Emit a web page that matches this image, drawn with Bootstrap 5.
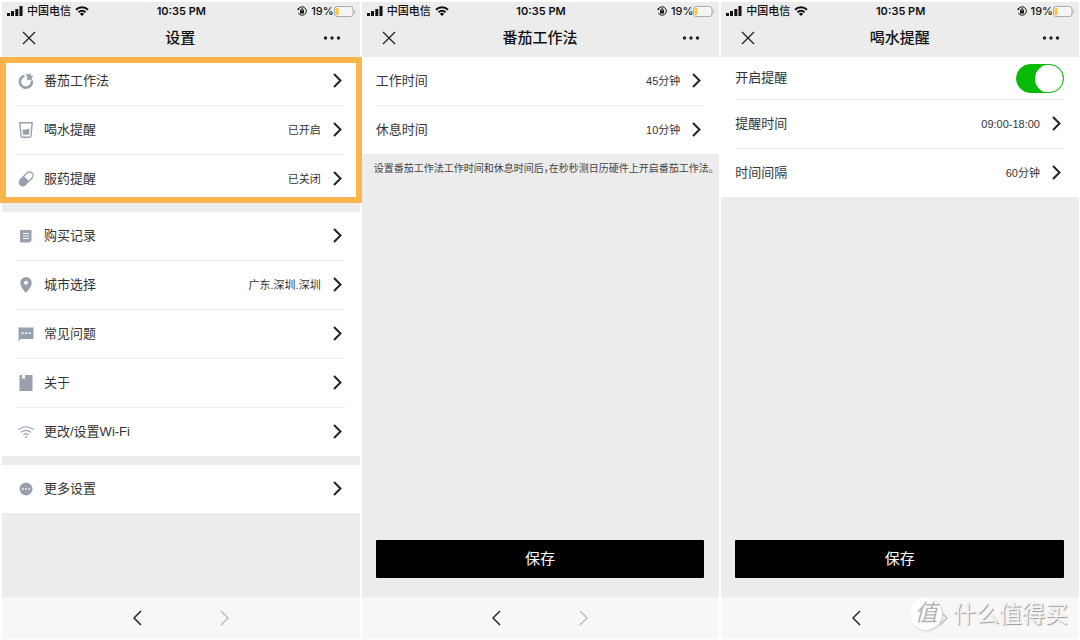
<!DOCTYPE html>
<html lang="zh-CN">
<head>
<meta charset="utf-8">
<meta name="viewport" content="width=device-width, initial-scale=1">
<title>设置</title>
<link rel="stylesheet" href="https://cdn.jsdelivr.net/npm/bootstrap@5.3.0/dist/css/bootstrap.min.css">
<style>
  body { font-family: "Liberation Sans", "Noto Sans CJK SC", sans-serif; color: #333; background: #fff; font-size: 13px; line-height: 20px; }
  .screens { display: grid; grid-template-columns: repeat(3, minmax(0, 1fr)); gap: 2px; padding: 2px 1px 1px 2px; }
  .screen { background: #ececec; }
  .thirds { display: grid; grid-template-columns: 1fr auto 1fr; align-items: center; color: #111; }
  .statusbar { height: 18px; padding: 0 4px 0 5px; font: 500 11px/18px Inter, "Noto Sans CJK SC", sans-serif; }
  .statusbar .clock { font-weight: 600; }
  .titlebar { height: 37px; padding: 0 19px 1px 18px; }
  .titlebar h1 { font-size: 15px; line-height: 20px; font-weight: 500; }
  .icon-btn { border: 0; background: none; padding: 0; width: 18px; height: 24px; display: flex; align-items: center; justify-content: center; color: #222; }
  .settings { background: #fff; padding: 0 15px 0 14px; }
  .settings + .settings { margin-top: 9px; }
  .entry { height: 48px; width: 100%; display: flex; align-items: center; padding-bottom: 1px; text-decoration: none; color: #333; }
  li + li .entry { border-top: 1px solid #ececec; height: 49px; }
  .entry.compact { height: 42px; padding: 0; }
  .entry .glyph { width: 16px; height: 16px; margin: 0 10px 0 2px; color: #98a0ad; }
  .entry .val { font-size: 11px; }
  .entry .go { width: 9px; height: 15px; margin: 0 3px 0 12px; color: #222; }
  .highlighted::after { content: ""; position: absolute; inset: 0 -2px; border: 6px solid #fdb44b; pointer-events: none; z-index: 2; }
  .form-check-input.toggle { width: 48px; height: 29px; margin: 0; background-size: 28px; border-color: #09bb07;
    --bs-form-switch-bg: url("data:image/svg+xml,%3csvg xmlns='http://www.w3.org/2000/svg' viewBox='-4 -4 8 8'%3e%3ccircle r='4' fill='%23fff'/%3e%3c/svg%3e"); }
  .form-check-input.toggle:checked { background-color: #09bb07; border-color: #09bb07;
    background-image: url("data:image/svg+xml,%3csvg xmlns='http://www.w3.org/2000/svg' viewBox='-4 -4 8 8'%3e%3ccircle r='4' fill='%23fff'/%3e%3c/svg%3e"); }
  .note { font-size: 10px; line-height: 14px; padding: 8px 0 0 12px; font-feature-settings: "halt"; white-space: nowrap; color: #444; }
  .save { margin: 0 15px 19px 14px; height: 38px; padding: 0; background: #000; color: #fff; border: 0; border-radius: 1px; font-size: 15px; line-height: 38px; }
  .save:hover { background: #222; color: #fff; }
  .pager { height: 42px; background: #f7f7f7; gap: 69px; }
  .pager .icon-btn:disabled { color: #b8b8b8; }
  .brandmark { position: absolute; right: 11px; bottom: 9px; gap: 11px; pointer-events: none; }
  .brandmark .seal { width: 32px; height: 32px; border-radius: 50%; background: #fff; box-shadow: 1px 1px 2px #ccc; color: #b4b4b4; font-size: 23px; line-height: 30px; font-style: italic; text-align: center; }
  .brandmark .brandname { font-size: 23px; line-height: 32px; color: #f4f4f4; text-shadow: 1px 1px 1px #999; }
</style>
</head>
<body>
<svg class="d-none" xmlns="http://www.w3.org/2000/svg">
  <symbol id="signal" viewBox="0 0 16 10"><path fill="currentColor" d="M0 7h3v3H0zM4 5h3v5H4zM8.300 3h3v7h-3zM12.500 0h3v10h-3z"/></symbol>
  <symbol id="wifi" viewBox="0 0 14 10"><g fill="none" stroke="currentColor" stroke-width="2"><path d="M1 3.800a8.500 8.500 0 0 1 12 0M3.500 6.300a5 5 0 0 1 7 0"/></g><path fill="currentColor" d="M7 10 4.900 7.900a3 3 0 0 1 4.200 0z"/></symbol>
  <symbol id="lock" viewBox="0 0 10 10"><path fill="none" stroke="currentColor" d="M1.300 3.200a4.200 4.200 0 1 1 0 3.600M3.800 5V3.900a1.200 1.200 0 0 1 2.400 0V5"/><path fill="currentColor" d="M3 4.600h4v2.800H3zM0 2.500l2.500 0-1 2.300z"/></symbol>
  <symbol id="battery" viewBox="0 0 22 11"><rect x=".5" y=".5" width="18.500" height="10" rx="2.500" fill="#f5f5f5" stroke="#aaa"/><path fill="#fdc62f" d="M2.500 2h2v7h-2a1 1 0 0 1-1-1V3a1 1 0 0 1 1-1z"/><path fill="#999" d="M20.200 3.500q1.500 2 0 4z"/></symbol>
  <symbol id="close" viewBox="0 0 14 14"><path fill="none" stroke="currentColor" stroke-width="1.300" d="m1 1 12 12M13 1 1 13"/></symbol>
  <symbol id="more" viewBox="0 0 18 4"><g fill="currentColor"><circle cx="2.500" cy="2" r="1.700"/><circle cx="9" cy="2" r="1.700"/><circle cx="15.500" cy="2" r="1.700"/></g></symbol>
  <symbol id="chevron" viewBox="0 0 9 15"><path fill="none" stroke="currentColor" stroke-width="2" d="m1 1 6.500 6.500L1 14"/></symbol>
  <symbol id="next" viewBox="0 0 9 16"><path fill="none" stroke="currentColor" stroke-width="1.300" d="m1 1 7 7-7 7"/></symbol>
  <symbol id="prev" viewBox="0 0 9 16"><path fill="none" stroke="currentColor" stroke-width="1.500" d="M8 1 1 8l7 7"/></symbol>
  <symbol id="tomato" viewBox="0 0 16 16"><path fill="none" stroke="currentColor" stroke-width="2.600" d="M6.500 2.800A6 6 0 1 0 13.800 7.500"/><path fill="currentColor" d="m7.500.500 2.700 1L12.300 0l.4 2.600 2.800.4-1.900 1.900.5 2.600-2.500-1L9 7.500l.4-2.900z"/></symbol>
  <symbol id="glass" viewBox="0 0 16 16"><path fill="none" stroke="currentColor" stroke-width="1.400" d="M1.800.8h12.400l-1.200 13a1.500 1.500 0 0 1-1.500 1.400h-7A1.500 1.500 0 0 1 3 13.800z"/><path fill="currentColor" d="M4.500 7.500c2.500.8 4-1 7-.5l-.6 5.700H5z"/></symbol>
  <symbol id="pill" viewBox="0 0 16 16"><g transform="rotate(45 8 8)"><path fill="currentColor" d="M3.800 7.500h8.400v5a4.200 4.200 0 0 1-8.400 0z"/><path fill="none" stroke="currentColor" stroke-width="1.300" d="M4.500 8V3a3.500 3.500 0 0 1 7 0v5"/></g></symbol>
  <symbol id="record" viewBox="0 0 16 16"><path fill="currentColor" d="M3 2h10.500v10.500L12 14.500H3a1 1 0 0 1-1-1V3a1 1 0 0 1 1-1z"/><path stroke="#fff" stroke-width=".9" d="M5 5.500h6M5 8h6M5 10.500h6"/></symbol>
  <symbol id="pin" viewBox="0 0 16 16"><path fill="currentColor" fill-rule="evenodd" d="M8 0a5.700 5.700 0 0 1 5.700 5.800C13.700 10 10 13.500 8 16 6 13.500 2.300 10 2.300 5.800A5.700 5.700 0 0 1 8 0zm0 3.800a2 2 0 1 0 0 4 2 2 0 0 0 0-4z"/></symbol>
  <symbol id="chat" viewBox="0 0 16 16"><path fill="currentColor" d="M.5 1.500h15v11.500h-13l-2 2.500z"/><path fill="#fff" d="M3.500 6.500h2v1.600h-2zM7 6.500h2v1.600H7zM10.500 6.500h2v1.600h-2z"/></symbol>
  <symbol id="book" viewBox="0 0 16 16"><path fill="currentColor" d="M1.500 0H4v4l1.500-1L7 4V0h7.500v16h-13z"/></symbol>
  <symbol id="wlan" viewBox="0 0 16 16"><g fill="none" stroke="currentColor" stroke-width="1.200"><path d="M.5 5.500q7.500-5.500 15 0M3 8.300q5-3.900 10 0M5.500 10.800q2.500-2 5 0"/></g><circle cx="8" cy="13" r="1" fill="currentColor"/></symbol>
  <symbol id="dots" viewBox="0 0 16 16"><circle cx="8" cy="8" r="6.500" fill="currentColor"/><path fill="#fff" d="M4 7.300h1.600v1.500H4zM7.200 7.300h1.600v1.500H7.200zM10.400 7.300H12v1.500h-1.600z"/></symbol>
</svg>

<main class="screens min-vh-100">
  <section class="screen d-flex flex-column">
    <div class="statusbar thirds">
      <div class="d-flex align-items-center"><svg class="me-1" width="16" height="10"><use href="#signal"/></svg><span>中国电信</span><svg class="ms-1" width="14" height="10"><use href="#wifi"/></svg></div>
      <span class="clock">10:35 PM</span>
      <div class="d-flex align-items-center justify-content-end"><svg class="me-1" width="10" height="10"><use href="#lock"/></svg><span>19%</span><svg width="22" height="11"><use href="#battery"/></svg></div>
    </div>
    <header class="titlebar thirds">
      <button class="icon-btn" type="button" aria-label="关闭"><svg width="14" height="14"><use href="#close"/></svg></button>
      <h1 class="m-0">设置</h1>
      <button class="icon-btn ms-auto" type="button" aria-label="更多"><svg width="18" height="4"><use href="#more"/></svg></button>
    </header>
    <ul class="settings list-unstyled mb-0 position-relative highlighted">
      <li><a class="entry" href="#"><svg class="glyph"><use href="#tomato"/></svg><span>番茄工作法</span><svg class="go ms-auto"><use href="#chevron"/></svg></a></li>
      <li><a class="entry" href="#"><svg class="glyph"><use href="#glass"/></svg><span>喝水提醒</span><span class="val ms-auto">已开启</span><svg class="go"><use href="#chevron"/></svg></a></li>
      <li><a class="entry" href="#"><svg class="glyph"><use href="#pill"/></svg><span>服药提醒</span><span class="val ms-auto">已关闭</span><svg class="go"><use href="#chevron"/></svg></a></li>
    </ul>
    <ul class="settings list-unstyled mb-0">
      <li><a class="entry" href="#"><svg class="glyph"><use href="#record"/></svg><span>购买记录</span><svg class="go ms-auto"><use href="#chevron"/></svg></a></li>
      <li><a class="entry" href="#"><svg class="glyph"><use href="#pin"/></svg><span>城市选择</span><span class="val ms-auto">广东.深圳.深圳</span><svg class="go"><use href="#chevron"/></svg></a></li>
      <li><a class="entry" href="#"><svg class="glyph"><use href="#chat"/></svg><span>常见问题</span><svg class="go ms-auto"><use href="#chevron"/></svg></a></li>
      <li><a class="entry" href="#"><svg class="glyph"><use href="#book"/></svg><span>关于</span><svg class="go ms-auto"><use href="#chevron"/></svg></a></li>
      <li><a class="entry" href="#"><svg class="glyph"><use href="#wlan"/></svg><span>更改/设置Wi-Fi</span><svg class="go ms-auto"><use href="#chevron"/></svg></a></li>
    </ul>
    <ul class="settings list-unstyled mb-0">
      <li><a class="entry" href="#"><svg class="glyph"><use href="#dots"/></svg><span>更多设置</span><svg class="go ms-auto"><use href="#chevron"/></svg></a></li>
    </ul>
    <nav class="pager d-flex align-items-center justify-content-center mt-auto" aria-label="页面导航">
      <button class="icon-btn" type="button" aria-label="后退"><svg width="9" height="16"><use href="#prev"/></svg></button>
      <button class="icon-btn" type="button" aria-label="前进" disabled><svg width="9" height="16"><use href="#next"/></svg></button>
    </nav>
  </section>

  <section class="screen d-flex flex-column">
    <div class="statusbar thirds">
      <div class="d-flex align-items-center"><svg class="me-1" width="16" height="10"><use href="#signal"/></svg><span>中国电信</span><svg class="ms-1" width="14" height="10"><use href="#wifi"/></svg></div>
      <span class="clock">10:35 PM</span>
      <div class="d-flex align-items-center justify-content-end"><svg class="me-1" width="10" height="10"><use href="#lock"/></svg><span>19%</span><svg width="22" height="11"><use href="#battery"/></svg></div>
    </div>
    <header class="titlebar thirds">
      <button class="icon-btn" type="button" aria-label="关闭"><svg width="14" height="14"><use href="#close"/></svg></button>
      <h1 class="m-0">番茄工作法</h1>
      <button class="icon-btn ms-auto" type="button" aria-label="更多"><svg width="18" height="4"><use href="#more"/></svg></button>
    </header>
    <ul class="settings list-unstyled mb-0">
      <li><a class="entry" href="#"><span>工作时间</span><span class="val ms-auto">45分钟</span><svg class="go"><use href="#chevron"/></svg></a></li>
      <li><a class="entry" href="#"><span>休息时间</span><span class="val ms-auto">10分钟</span><svg class="go"><use href="#chevron"/></svg></a></li>
    </ul>
    <p class="note mb-0">设置番茄工作法工作时间和休息时间后，在秒秒测日历硬件上开启番茄工作法。</p>
    <button class="save btn mt-auto" type="button">保存</button>
    <nav class="pager d-flex align-items-center justify-content-center" aria-label="页面导航">
      <button class="icon-btn" type="button" aria-label="后退"><svg width="9" height="16"><use href="#prev"/></svg></button>
      <button class="icon-btn" type="button" aria-label="前进" disabled><svg width="9" height="16"><use href="#next"/></svg></button>
    </nav>
  </section>

  <section class="screen d-flex flex-column position-relative">
    <div class="statusbar thirds">
      <div class="d-flex align-items-center"><svg class="me-1" width="16" height="10"><use href="#signal"/></svg><span>中国电信</span><svg class="ms-1" width="14" height="10"><use href="#wifi"/></svg></div>
      <span class="clock">10:35 PM</span>
      <div class="d-flex align-items-center justify-content-end"><svg class="me-1" width="10" height="10"><use href="#lock"/></svg><span>19%</span><svg width="22" height="11"><use href="#battery"/></svg></div>
    </div>
    <header class="titlebar thirds">
      <button class="icon-btn" type="button" aria-label="关闭"><svg width="14" height="14"><use href="#close"/></svg></button>
      <h1 class="m-0">喝水提醒</h1>
      <button class="icon-btn ms-auto" type="button" aria-label="更多"><svg width="18" height="4"><use href="#more"/></svg></button>
    </header>
    <ul class="settings list-unstyled mb-0">
      <li><div class="entry compact"><label for="remind">开启提醒</label><div class="form-switch ms-auto p-0 d-flex"><input class="form-check-input toggle" type="checkbox" role="switch" id="remind" checked></div></div></li>
      <li><a class="entry" href="#"><span>提醒时间</span><span class="val ms-auto">09:00-18:00</span><svg class="go"><use href="#chevron"/></svg></a></li>
      <li><a class="entry" href="#"><span>时间间隔</span><span class="val ms-auto">60分钟</span><svg class="go"><use href="#chevron"/></svg></a></li>
    </ul>
    <button class="save btn mt-auto" type="button">保存</button>
    <nav class="pager d-flex align-items-center justify-content-center" aria-label="页面导航">
      <button class="icon-btn" type="button" aria-label="后退"><svg width="9" height="16"><use href="#prev"/></svg></button>
      <button class="icon-btn" type="button" aria-label="前进" disabled><svg width="9" height="16"><use href="#next"/></svg></button>
    </nav>
    <div class="brandmark d-flex align-items-center"><span class="seal">值</span><span class="brandname">什么值得买</span></div>
  </section>
</main>
<script src="https://cdn.jsdelivr.net/npm/bootstrap@5.3.0/dist/js/bootstrap.bundle.min.js"></script>
</body>
</html>
